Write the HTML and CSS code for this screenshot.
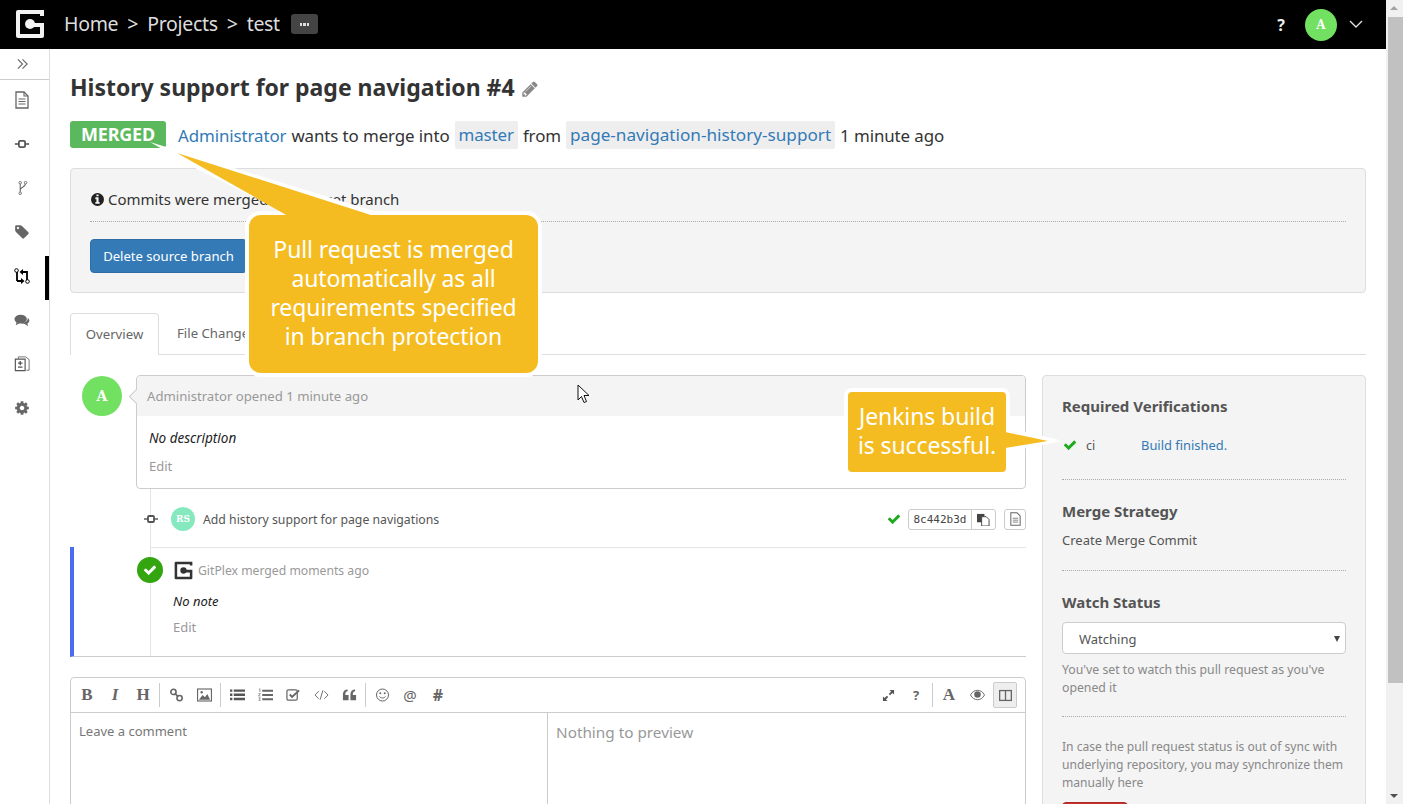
FILE: index.html
```html
<!DOCTYPE html>
<html lang="en">
<head>
<meta charset="utf-8">
<title>History support for page navigation #4</title>
<link rel="stylesheet" href="styles.css">
</head>
<body>
<div class="page">
  <header class="topbar">
    <svg class="logo" viewBox="0 0 30 30"><path fill="#f2f2f2" d="M3 1h26v6h-4V5H5v20h20v-7h-9v-4h13v13a2 2 0 0 1-2 2H3a2 2 0 0 1-2-2V3a2 2 0 0 1 2-2z"/><circle cx="15" cy="15" r="5" fill="#f2f2f2"/></svg>
    <nav class="crumbs"><a>Home</a><span>&gt;</span><a>Projects</a><span>&gt;</span><a>test</a></nav>
    <span class="more"><i></i><i></i><i></i></span>
    <span class="grow"></span>
    <span class="help">?</span>
    <span class="avatar av-top">A</span>
    <svg class="chev" viewBox="0 0 14 8"><path d="M1 1l6 6 6-6" fill="none" stroke="#ddd" stroke-width="1.4"/></svg>
  </header>
  <div class="layout">
    <aside class="side">
      <div class="toggle"><svg viewBox="0 0 14 12" class="ic14"><path d="M2 1l5 5-5 5M7 1l5 5-5 5" fill="none" stroke="#666" stroke-width="1.2"/></svg></div>
      <div class="item"><svg viewBox="0 0 16 18" class="ic"><path d="M2 1h8l4 4v12H2z" fill="#fff" stroke="#666" stroke-width="1.3"/><path d="M10 1v4h4M4.500 8h7M4.500 10.500h7M4.500 13h7" fill="none" stroke="#666" stroke-width="1.100"/></svg></div>
      <div class="item"><svg viewBox="0 0 18 18" class="ic"><path d="M1 9h16" stroke="#666" stroke-width="2"/><rect x="5.500" y="5.500" width="7" height="7" rx="1.500" fill="#fff" stroke="#555" stroke-width="2"/></svg></div>
      <div class="item"><svg viewBox="0 0 18 18" class="ic"><path d="M7 4v10M13 4c0 4-6 4-6 7" fill="none" stroke="#666" stroke-width="1.200"/><circle cx="7" cy="3" r="1.400" fill="#fff" stroke="#666"/><circle cx="13" cy="3" r="1.400" fill="#fff" stroke="#666"/><circle cx="7" cy="15" r="1.400" fill="#fff" stroke="#666"/></svg></div>
      <div class="item"><svg viewBox="0 0 1792 1792" class="ic"><path fill="#666" d="M576 448q0-53-37.500-90.500t-90.500-37.500-90.500 37.500-37.500 90.500 37.500 90.500 90.500 37.500 90.500-37.500 37.500-90.500zm1067 576q0 53-37 90l-491 492q-39 37-91 37-53 0-90-37l-715-716q-38-37-64.500-101t-26.500-117v-416q0-52 38-90t90-38h416q53 0 117 26.500t102 64.500l715 714q37 39 37 91z"/></svg></div>
      <div class="item active"><svg viewBox="0 0 16 16" class="ic"><path d="M3 4v9M13 12V4H8M8 13H3" fill="none" stroke="#000" stroke-width="1.800"/><path d="M9 1L5.500 4 9 7zM7 10l3.500 3L7 16z" fill="#000"/><circle cx="2.500" cy="2.500" r="1.800" fill="#fff" stroke="#000"/><circle cx="13.500" cy="13.500" r="1.800" fill="#fff" stroke="#000"/></svg></div>
      <div class="item"><svg viewBox="0 0 18 16" class="ic"><ellipse cx="7.500" cy="7" rx="7" ry="5" fill="#666"/><path d="M3 10L2 14l5-3z" fill="#666"/><path d="M15.500 5.500c2.500 2 2.500 5-.5 6.500l1 3-4-2.500c-1.500 0-3-.2-4-1 4 0 8-2 7.500-6z" fill="#666"/></svg></div>
      <div class="item"><svg viewBox="0 0 18 18" class="ic"><path d="M5 3V1h8l4 3v12h-3" fill="none" stroke="#666"/><path d="M1.500 3.500h11v13h-11z" fill="#fff" stroke="#555" stroke-width="1.300"/><path d="M7 5.500v5M4.500 8h5M4.500 12.500h5" stroke="#555" stroke-width="1.500"/></svg></div>
      <div class="item"><svg viewBox="0 0 1792 1792" class="ic"><path fill="#666" d="M1152 896q0-106-75-181t-181-75-181 75-75 181 75 181 181 75 181-75 75-181zm512-109v222q0 12-8 23t-20 13l-185 28q-19 54-39 91 35 50 107 138 10 12 10 25t-9 23q-27 37-99 108t-94 71q-12 0-26-9l-138-108q-44 23-91 38-16 136-29 186-7 28-36 28h-222q-14 0-24.500-8.500t-11.500-21.500l-28-184q-49-16-90-37l-141 107q-10 9-25 9-14 0-25-11-126-114-165-168-7-10-7-23 0-12 8-23 15-21 51-66.500t54-70.500q-27-50-41-99l-183-27q-13-2-21-12.500t-8-23.500v-222q0-12 8-23t19-13l186-28q14-46 39-92-40-57-107-138-10-12-10-24 0-10 9-23 26-36 98.500-107.500t94.500-71.500q13 0 26 10l138 107q44-23 91-38 16-136 29-186 7-28 36-28h222q14 0 24.500 8.500t11.500 21.500l28 184q49 16 90 37l142-107q9-9 24-9 13 0 25 10 129 119 165 170 7 8 7 22 0 12-8 23-15 21-51 66.500t-54 70.500q26 50 41 98l183 28q13 2 21 12.500t8 23.500z"/></svg></div>
    </aside>
    <main class="main">
      <h1 class="title">History support for page navigation #4 <svg viewBox="0 0 1792 1792" class="pencil"><path fill="#888" d="M491 1536l91-91-235-235-91 91v107h128v128h107zm523-928q0-22-22-22-10 0-17 7l-542 542q-7 7-7 17 0 22 22 22 10 0 17-7l542-542q7-7 7-17zm-54-192l416 416-832 832h-416v-416zm683 96q0 53-37 90l-166 166-416-416 166-165q36-38 90-38 53 0 91 38l235 234q37 39 37 91z"/></svg></h1>
      <div class="meta">
        <span class="badge">MERGED</span>
        <a class="link">Administrator</a><span>wants to merge into</span><a class="chip">master</a><span>from</span><a class="chip chip-long">page-navigation-history-support</a><span>1 minute ago</span>
      </div>
      <section class="status">
        <p class="status-text"><svg viewBox="0 0 1792 1792" class="info"><path fill="#222" d="M1152 1376v-160q0-14-9-23t-23-9h-96v-512q0-14-9-23t-23-9h-320q-14 0-23 9t-9 23v160q0 14 9 23t23 9h96v320h-96q-14 0-23 9t-9 23v160q0 14 9 23t23 9h448q14 0 23-9t9-23zm-128-896v-160q0-14-9-23t-23-9h-192q-14 0-23 9t-9 23v160q0 14 9 23t23 9h192q14 0 23-9t9-23zm640 416q0 209-103 385.500t-279.500 279.500-385.500 103-385.500-103-279.500-279.500-103-385.500 103-385.500 279.500-279.500 385.500-103 385.500 103 279.500 279.500 103 385.500z"/></svg>Commits were merged into target branch</p>
        <button class="btn-primary">Delete source branch</button>
      </section>
      <div class="tabs"><a class="tab on">Overview</a><a class="tab">File Changes</a></div>
      <div class="cols">
        <div class="left">
          <div class="comment">
            <span class="avatar av-big">A</span>
            <div class="card">
              <div class="card-head">Administrator opened 1 minute ago</div>
              <div class="card-body"><em>No description</em><a class="edit">Edit</a></div>
            </div>
          </div>
          <div class="commit">
            <svg viewBox="0 0 14 10" class="commit-ic"><path d="M0 5h14" stroke="#666" stroke-width="1.600"/><rect x="4" y="2" width="6" height="6" rx="1" fill="#fff" stroke="#555" stroke-width="1.800"/></svg>
            <span class="avatar av-rs">RS</span>
            <span class="commit-msg">Add history support for page navigations</span>
            <span class="grow"></span>
            <svg viewBox="0 0 1792 1792" class="ok"><path fill="#1eaa1e" d="M1671 566q0 40-28 68l-724 724-136 136q-28 28-68 28t-68-28l-136-136-362-362q-28-28-28-68t28-68l136-136q28-28 68-28t68 28l294 295 656-657q28-28 68-28t68 28l136 136q28 28 28 68z"/></svg>
            <span class="hash"><code>8c442b3d</code><span class="copy"><svg viewBox="0 0 14 14" width="13" height="13"><path d="M0 1h8v9H0z" fill="#444"/><path d="M5 4h5l3 3v7H5z" fill="#fff" stroke="#444"/></svg></span></span>
            <span class="filebtn"><svg viewBox="0 0 16 18" width="13" height="14"><path d="M2 1h8l4 4v12H2z" fill="#fff" stroke="#666" stroke-width="1.300"/><path d="M4.500 8h7M4.500 10.500h7M4.500 13h7" stroke="#666"/></svg></span>
          </div>
          <div class="merged">
            <div class="merged-in">
              <div class="merged-head">
                <span class="okc"><svg viewBox="0 0 1792 1792" width="14" height="14"><path fill="#fff" d="M1671 566q0 40-28 68l-724 724-136 136q-28 28-68 28t-68-28l-136-136-362-362q-28-28-28-68t28-68l136-136q28-28 68-28t68 28l294 295 656-657q28-28 68-28t68 28l136 136q28 28 28 68z"/></svg></span>
                <svg class="logo-s" viewBox="0 0 30 30"><path fill="#333" d="M3 1h26v6h-4V5H5v20h20v-7h-9v-4h13v13a2 2 0 0 1-2 2H3a2 2 0 0 1-2-2V3a2 2 0 0 1 2-2z"/><circle cx="15" cy="15" r="5" fill="#333"/></svg>
                <span class="merged-by">GitPlex merged moments ago</span>
              </div>
              <em class="note">No note</em>
              <a class="edit">Edit</a>
            </div>
          </div>
          <div class="editor">
            <div class="toolbar">
              <span class="tool serif">B</span><span class="tool serif ital">I</span><span class="tool serif">H</span><i class="sep"></i>
              <span class="tool"><svg viewBox="0 0 16 16" class="ti"><circle cx="4.500" cy="4.500" r="3" fill="none" stroke="#666" stroke-width="1.800"/><circle cx="11.500" cy="11.500" r="3" fill="none" stroke="#666" stroke-width="1.800"/><path d="M6 6l4 4" stroke="#666" stroke-width="2"/></svg></span>
              <span class="tool"><svg viewBox="0 0 16 14" class="ti"><rect x=".6" y=".6" width="14.800" height="12.800" fill="none" stroke="#666" stroke-width="1.200"/><path d="M2 12l4-5 2.500 2.500L11 6l3 6z" fill="#666"/><circle cx="5" cy="4" r="1.300" fill="#666"/></svg></span><i class="sep"></i>
              <span class="tool"><svg viewBox="0 0 16 14" class="ti"><path d="M0 1h2.500v2.500H0zM4 1h12v2.500H4zM0 5.500h2.500V8H0zM4 5.500h12V8H4zM0 10h2.500v2.500H0zM4 10h12v2.500H4z" fill="#555"/></svg></span>
              <span class="tool"><svg viewBox="0 0 16 14" class="ti"><path d="M4.500 1.500H16v2H4.500zM4.500 6H16v2H4.500zM4.500 10.500H16v2H4.500z" fill="#666"/><path d="M1 1l1-.7v3.500M.5 5.500h2l-2 2.500h2M.5 10h2l-1 1.300 1 1.400H.5" fill="none" stroke="#666" stroke-width=".7"/></svg></span>
              <span class="tool"><svg viewBox="0 0 16 14" class="ti"><rect x="1" y="1.500" width="11" height="11" rx="1.500" fill="none" stroke="#666" stroke-width="1.300"/><path d="M4 6.500l2.500 2.500L14 2" fill="none" stroke="#666" stroke-width="2"/></svg></span>
              <span class="tool"><svg viewBox="0 0 16 12" class="ti"><path d="M5 2L1 6l4 4M11 2l4 4-4 4M9.500 1L6.500 11" fill="none" stroke="#666" stroke-width="1"/></svg></span>
              <span class="tool"><svg viewBox="0 0 16 14" class="ti"><path d="M7 7v5.500H1V6c0-3 2-5 5-5v2c-1.500 0-2.500 1-2.500 4zM15 7v5.500H9V6c0-3 2-5 5-5v2c-1.500 0-2.500 1-2.500 4z" fill="#666"/></svg></span><i class="sep"></i>
              <span class="tool"><svg viewBox="0 0 14 14" class="ti"><circle cx="7" cy="7" r="6" fill="none" stroke="#666"/><circle cx="4.800" cy="5.300" r="1" fill="#666"/><circle cx="9.200" cy="5.300" r="1" fill="#666"/><path d="M4 8.500c1.500 2 4.500 2 6 0" fill="none" stroke="#666"/></svg></span>
              <span class="tool sym">@</span>
              <span class="tool sym bold">#</span>
              <span class="grow"></span>
              <span class="tool"><svg viewBox="0 0 14 14" class="ti-s"><path d="M8 1h5v5l-1.800-1.800-2.500 2.500-1.400-1.400 2.500-2.500zM6 13H1V8l1.800 1.800 2.500-2.500 1.400 1.400-2.500 2.500z" fill="#555"/></svg></span>
              <span class="tool bold q">?</span><i class="sep"></i>
              <span class="tool serif big">A</span>
              <span class="tool"><svg viewBox="0 0 16 12" class="ti"><path d="M.5 6C2.500 2.500 5 1 8 1s5.500 1.500 7.500 5c-2 3.500-4.500 5-7.500 5S2.500 9.500.5 6z" fill="#fff" stroke="#666"/><circle cx="8" cy="5.500" r="3.500" fill="#666"/></svg></span>
              <span class="tool tool-on"><svg viewBox="0 0 14 12" class="ti-s"><rect x=".7" y=".7" width="12.600" height="10.600" fill="none" stroke="#666" stroke-width="1.400"/><path d="M7 1v10" stroke="#666" stroke-width="1.400"/></svg></span>
            </div>
            <div class="ed-body">
              <div class="ed-input">Leave a comment</div>
              <div class="ed-preview">Nothing to preview</div>
            </div>
          </div>
        </div>
        <aside class="info-panel">
          <section class="sec sec-a">
            <h3>Required Verifications</h3>
            <div class="ver">
              <svg viewBox="0 0 1792 1792" class="ok ok-b"><path fill="#1eaa1e" d="M1671 566q0 40-28 68l-724 724-136 136q-28 28-68 28t-68-28l-136-136-362-362q-28-28-28-68t28-68l136-136q28-28 68-28t68 28l294 295 656-657q28-28 68-28t68 28l136 136q28 28 28 68z"/></svg>
              <span class="ci">ci</span><a class="link small">Build finished.</a>
            </div>
          </section>
          <section class="sec sec-b"><h3>Merge Strategy</h3><p class="strategy">Create Merge Commit</p></section>
          <section class="sec sec-c">
            <h3>Watch Status</h3>
            <span class="select-wrap"><select class="watch"><option>Watching</option></select></span>
            <p class="hint">You've set to watch this pull request as you've opened it</p>
          </section>
          <section class="sec-d">
            <p class="hint">In case the pull request status is out of sync with underlying repository, you may synchronize them manually here</p>
            <button class="btn-danger" aria-label="Synchronize"></button>
          </section>
        </aside>
      </div>
    </main>
  </div>
</div>
<div class="scrollbar">
  <span class="arrow-up"></span>
  <span class="thumb"></span>
  <span class="grow"></span>
  <span class="arrow-down"></span>
</div>
<svg class="pointers" viewBox="0 0 1403 804" width="1403" height="804">
  <polygon points="150,142 195,168 296,218 390,216" fill="#fff"/>
  <polygon points="1063,441 1006,427 1006,452" fill="#fff"/>
</svg>
<div class="callout c1">Pull request is merged automatically as all requirements specified in branch protection</div>
<div class="callout c2">Jenkins build<br>is successful.</div>
<svg class="pointers" viewBox="0 0 1403 804" width="1403" height="804">
  <polygon points="177,153 288,216 374,216" fill="#f4bc21"/>
  <polygon points="1048,441 1005,432 1005,448" fill="#f4bc21"/>
</svg>
<svg class="cursor" viewBox="0 0 13 20" width="13" height="20"><path d="M1 1v15l3.500-3.500 2.500 6 2.500-1-2.500-6h5z" fill="#fff" stroke="#111"/></svg>
</body>
</html>
```
FILE: styles.css
```css
* { box-sizing: border-box; }
html, body { margin: 0; height: 804px; overflow: hidden; }
body {
  display: flex;
  font-family: "Noto Sans", "Open Sans", sans-serif;
  font-size: 14px;
  color: #333;
  background: #fff;
}
p, h1, h3 { margin: 0; }
.grow { flex: 1; }
.page { width: 1386px; height: 804px; overflow: hidden; }

/* top bar */
.topbar { height: 49px; background: #000; display: flex; align-items: center; padding: 0 23px 0 15px; color: #ddd; }
.logo { width: 30px; height: 30px; margin-top: -2px; }
.crumbs { display: flex; gap: 9px; margin: -3px 0 0 19px; font-size: 19.500px; letter-spacing: -.3px; }
.more { margin: -1px 0 0 11px; width: 27px; height: 20px; border-radius: 3px; background: #444; display: flex; align-items: center; justify-content: center; gap: 1px; }
.more i { width: 2.500px; height: 3px; background: #ddd; }
.help { font-weight: 700; color: #eee; font-size: 16px; margin-right: 20px; }
.avatar { display: flex; align-items: center; justify-content: center; border-radius: 50%; background: #72e060; color: #fff; font-family: "DejaVu Serif", serif; font-weight: 700; flex: none; }
.av-top { width: 32px; height: 32px; font-size: 12px; margin-top: 1px; }
.chev { width: 14px; height: 8px; margin-left: 12px; margin-top: -2px; }

/* layout */
.layout { display: flex; height: 755px; }
.side { width: 50px; flex: none; border-right: 1px solid #ddd; }
.toggle { height: 31px; border-bottom: 1px solid #ccc; display: flex; align-items: center; justify-content: center; padding-right: 4px; }
.ic14 { width: 13px; height: 12px; }
.item { height: 44px; display: flex; align-items: flex-start; justify-content: center; padding: 11px 5px 0 0; }
.item.active { box-shadow: inset -4px 0 0 #000; }
.ic { width: 16px; height: 18px; }
.main { flex: 1; padding: 22px 20px 0; min-width: 0; }

/* title */
.title { font-size: 23px; line-height: 32px; font-weight: 700; color: #333; letter-spacing: -.02px; display: flex; align-items: center; gap: 6px; }
.pencil { width: 18px; height: 18px; margin-top: 3px; }
.meta { margin-top: 18px; height: 28px; display: flex; align-items: center; gap: 5px; font-size: 16.900px; letter-spacing: -.1px; }
.badge { background: #5cb85c; color: #fff; font-weight: 700; height: 27px; width: 96px; margin: -1px 7px 0 0; padding-bottom: 2px; border-radius: 3px; display: flex; align-items: center; justify-content: center; font-size: 18px; letter-spacing: -.2px; }
.link { color: #337ab7; }
.chip { background: #eee; color: #337ab7; padding: 0 4px; height: 28px; line-height: 28px; border-radius: 2px; }
.chip-long { font-size: 17.150px; letter-spacing: 0; }
.status { margin-top: 19px; height: 125px; background: #f4f4f4; border: 1px solid #ddd; border-radius: 4px; padding: 20px 19px 19px; }
.status-text { height: 33px; line-height: 20px; border-bottom: 1px dotted #aaa; display: flex; align-items: flex-start; font-size: 15px; letter-spacing: -.03px; }
.info { width: 15px; height: 15px; margin: 3px 3px 0 0; flex: none; }
.btn-primary { display: block; margin-top: 17px; width: 157px; height: 34px; background: #337ab7; color: #fff; border: 1px solid #2e6da4; border-radius: 4px; font: 13.100px "Noto Sans", sans-serif; padding: 0; }

/* tabs */
.tabs { margin-top: 20px; height: 42px; display: flex; border-bottom: 1px solid #ddd; }
.tab { padding: 0 18px; line-height: 41px; font-size: 13.200px; color: #666; }
.tab.on { width: 89px; padding: 0; text-align: center; height: 42px; background: #fff; border: 1px solid #ddd; border-bottom: 0; border-radius: 4px 4px 0 0; }

/* columns */
.cols { margin-top: 20px; display: flex; gap: 16px; align-items: flex-start; }
.left { width: 956px; flex: none; }
.comment { display: flex; padding-left: 12px; gap: 14px; }
.av-big { width: 40px; height: 40px; font-size: 14px; margin-top: 1px; }
.card { flex: 1; height: 114px; border: 1px solid #ccc; border-radius: 4px; position: relative; }
.card::before { content: ""; position: absolute; left: -6px; top: 15px; width: 10px; height: 10px; background: #f4f4f4; border-left: 1px solid #ccc; border-bottom: 1px solid #ccc; transform: rotate(45deg); }
.card-head { height: 40px; background: #f4f4f4; padding-left: 10px; line-height: 40px; color: #999; font-size: 13.150px; border-radius: 4px 4px 0 0; }
.card-body { padding: 12px 12px 0; font-size: 13.500px; display: flex; flex-direction: column; }
.card-body em { line-height: 20px; color: #222; }
.edit { color: #999; font-size: 13px; line-height: 20px; margin-top: 8px; }

.commit { margin-left: 80px; height: 58px; padding-top: 2px; border-left: 1px solid #e5e5e5; display: flex; align-items: center; }
.commit-ic { width: 14px; height: 10px; margin-left: -7px; flex: none; }
.av-rs { width: 24px; height: 24px; background: #86e8bf; font-size: 9px; margin-left: 13px; }
.commit-msg { margin-left: 8px; font-size: 12.250px; color: #555; }
.ok { width: 14px; height: 14px; flex: none; }
.hash { margin-left: 7px; display: flex; height: 21px; border: 1px solid #ccc; border-radius: 3px; }
.hash code { width: 63px; text-align: center; font: 11px/19px "DejaVu Sans Mono", monospace; color: #444; border-right: 1px solid #ccc; }
.copy { width: 23px; display: flex; align-items: center; justify-content: center; }
.filebtn { margin-left: 8px; width: 22px; height: 21px; border: 1px solid #ccc; border-radius: 3px; display: flex; align-items: center; justify-content: center; }

.merged { height: 110px; border-left: 4px solid #4a6cf0; border-bottom: 1px solid #ccc; padding-left: 76px; }
.merged-in { height: 109px; border-left: 1px solid #e5e5e5; border-top: 1px solid #e5e5e5; padding-top: 9px; display: flex; flex-direction: column; padding-left: 22px; }
.merged-head { height: 26px; display: flex; align-items: center; margin-left: -36px; }
.okc { width: 26px; height: 26px; border-radius: 50%; background: #33a50f; display: flex; align-items: center; justify-content: center; flex: none; }
.logo-s { width: 19px; height: 19px; margin-left: 11px; flex: none; }
.merged-by { margin-left: 5px; color: #999; font-size: 12.200px; }
.note { font-size: 13px; color: #222; line-height: 20px; margin-top: 8px; }
.merged-in .edit { margin-top: 6px; }

/* editor */
.editor { margin-top: 20px; height: 300px; border: 1px solid #ccc; border-radius: 4px 4px 0 0; }
.toolbar { height: 35px; border-bottom: 1px solid #ccc; display: flex; align-items: center; padding: 0 6px 0 2px; color: #666; }
.tool { width: 28px; height: 24px; display: flex; align-items: center; justify-content: center; flex: none; font-size: 14px; }
.serif { font: 700 17px "Liberation Serif", serif; }
.ital { font-style: italic; }
.big { font-size: 17px; }
.sym { font-size: 15px; }
.bold { font-weight: 700; }
.sym.bold { font-size: 16px; }
.q { font-size: 13px; }
.ti { width: 15px; height: 14px; }
.ti-s { width: 13px; height: 13px; }
.sep { width: 1px; height: 24px; margin: 0 2px; background: #ccc; flex: none; }
.tool-on { width: 24px; height: 26px; margin: 0 2px; background: #eee; border: 1px solid #ccc; border-radius: 2px; }
.ed-body { display: flex; height: 264px; }
.ed-input { width: 477px; border-right: 1px solid #ccc; padding: 9px 8px; font-size: 13px; line-height: 18px; color: #777; }
.ed-preview { flex: 1; padding: 8px 8px; font-size: 15.300px; line-height: 22px; color: #999; }

/* right panel */
.info-panel { width: 324px; flex: none; height: 460px; background: #f4f4f4; border: 1px solid #ddd; border-radius: 4px; padding: 20px 19px 0; color: #555; }
.sec { border-bottom: 1px dotted #aaa; }
.info-panel h3 { font-size: 15px; line-height: 21px; font-weight: 700; color: #555; }
.sec-a { padding-bottom: 24px; }
.ver { margin-top: 18px; height: 20px; display: flex; align-items: center; font-size: 12.500px; }
.ok-b { margin-left: 1px; }
.ci { margin-left: 9px; width: 55px; }
.small { font-size: 12.900px; }
.sec-b { margin-top: 21px; padding-bottom: 20px; }
.strategy { margin-top: 8px; line-height: 20px; font-size: 13px; }
.sec-c { margin-top: 21px; padding-bottom: 19px; }
.select-wrap { display: block; position: relative; margin-top: 9px; }
.select-wrap::after { content: ""; position: absolute; right: 6px; top: 14px; border: 3.500px solid transparent; border-top: 6px solid #444; border-bottom: 0; }
.watch { display: block; width: 284px; height: 32px; appearance: none; background: #fff; border: 1px solid #ccc; border-radius: 4px; padding: 2px 0 0 16px; color: #555; font: 13px "Noto Sans", sans-serif; }
.hint { margin-top: 7px; font-size: 12.250px; line-height: 18px; color: #888; }
.sec-d .hint { margin-top: 21px; font-size: 12.100px; }
.btn-danger { display: block; margin-top: 10px; width: 66px; height: 34px; background: #c9302c; border: 1px solid #ac2925; border-radius: 4px; }

/* scrollbar */
.scrollbar { width: 17px; flex: none; height: 804px; background: #f1f1f1; display: flex; flex-direction: column; align-items: flex-end; }
.thumb { width: 15px; height: 666px; background: #c1c1c1; }
.arrow-up, .arrow-down { width: 17px; height: 17px; flex: none; position: relative; }
.arrow-up::after, .arrow-down::after { content: ""; position: absolute; left: 4px; border: 4px solid transparent; border-left-width: 4.500px; border-right-width: 4.500px; }
.arrow-up::after { top: 2px; border-bottom-color: #a3a3a3; }
.arrow-down::after { top: 7px; border-top-color: #505050; }

/* annotations over the page */
.pointers { position: absolute; left: 0; top: 0; pointer-events: none; }
.callout { position: absolute; background: #f4bc21; color: #fff; text-align: center; font-size: 23px; line-height: 29px; border-radius: 12px; box-shadow: 0 0 0 4px #fff; letter-spacing: -.1px; }
.c1 { left: 249px; top: 215px; width: 289px; height: 158px; padding: 20px 14px 0; }
.c2 { left: 848px; top: 392px; width: 158px; height: 80px; padding: 10px 0 0; border-radius: 4px; }
.cursor { position: absolute; left: 577px; top: 384px; }
```
